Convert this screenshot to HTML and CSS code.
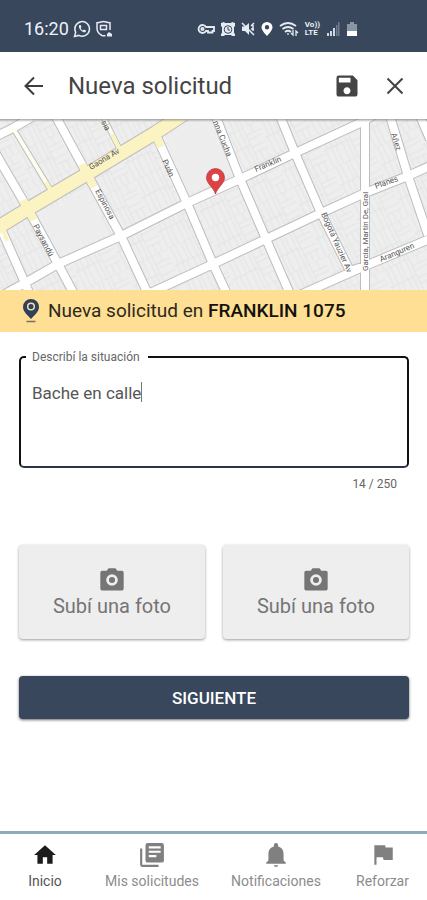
FILE: index.html
```html
<!DOCTYPE html>
<html lang="es">
<head>
<meta charset="utf-8">
<meta name="viewport" content="width=device-width, initial-scale=1">
<title>Nueva solicitud</title>
<link rel="stylesheet" href="styles.css">
</head>
<body>
<div class="status">
  <div class="status-group">
    <span class="clock">16:20</span>
    <svg width="18" height="18" viewBox="0 0 18 18" fill="none" stroke="#e6ebf2"><path d="M1.500 16.500l1.200-4.200A7.300 7.300 0 1 1 5.800 15.400z" stroke-width="1.500"/><path d="M6 5.200c-1 3 3 7.800 6.500 7l.6-1.700-2.200-1-1 .9C8.700 9.900 8 9 7.700 8l.8-.9-.9-2z" fill="#e6ebf2" stroke="none"/></svg>
    <svg width="18" height="18" viewBox="0 0 18 18" fill="none" stroke="#e6ebf2" stroke-width="1.500"><path d="M10.500 15.300c-1.500.8-2.500.7-3.500.2C3.500 13.500 2 12 2 8.500V2.800C6 2.600 6 1.500 8.500 1.500s2.500 1.100 6.500 1.300V10"/><rect x="5.500" y="5.500" width="6" height="4"/><path d="M12 16.500v-2.500l2-2 3 2v2.500z" fill="#e6ebf2" stroke="none"/></svg>
  </div>
  <div class="status-group status-right">
    <svg width="18" height="16" viewBox="0 0 18 16" fill="none" stroke="#e6ebf2" stroke-width="1.800"><path d="M9 6A4 4 0 1 0 9 10H11v1.500h4.500V10H17V6z"/><circle cx="5.500" cy="8" r="1.200"/></svg>
    <svg width="14" height="16" viewBox="0 0 14 16"><path d="M0 2l3-1 1 1h6l1-1 3 1v3l-1 1v6l1 1v2h-3l-1-1H4l-1 1H0v-2l1-1V6L0 5z" fill="#e6ebf2"/><circle cx="7" cy="8.500" r="3.800" fill="none" stroke="#38475c" stroke-width="1"/><path d="M7 6v3h2" fill="none" stroke="#38475c" stroke-width="1"/></svg>
    <svg width="14" height="16" viewBox="0 0 14 16" stroke="#e6ebf2"><path d="M1 5.500h3L8 2v12l-4-4H1z" fill="#e6ebf2" stroke="none"/><path d="M1 2l12 12M10 5l3-3M10 8h3M12 4v6" fill="none" stroke-width="1.500"/></svg>
    <svg width="12" height="16" viewBox="0 0 12 16"><path fill-rule="evenodd" d="M6 1a5.500 5.500 0 0 0-5.500 5.500C.5 9.500 6 15 6 15s5.500-5.500 5.500-8.500A5.500 5.500 0 0 0 6 1zm0 3a2.200 2.200 0 1 1 0 4.400A2.200 2.200 0 0 1 6 4z" fill="#fff"/></svg>
    <svg width="20" height="16" viewBox="0 0 20 16" fill="none" stroke="#e6ebf2" stroke-width="1.800"><path d="M1 5q8-6 16 0M3.500 8q5.500-4 11 0M6 11q3-2.500 6 0"/><path d="M9 12v2M14 9v5l-2-2M17 15v-5l2 2" stroke-width="1.300"/></svg>
    <span class="volte"><span>Vo))</span><span>LTE</span></span>
    <svg width="14" height="16" viewBox="0 0 14 16"><path d="M1 12h2v3H1zM4 10h2v5H4zM7 7h2v8H7z" fill="#d0d7e0"/><path d="M10 4h1.500v11H10zM12 1h1.500v14H12z" fill="#6f7d8f"/></svg>
    <svg width="12" height="16" viewBox="0 0 12 16"><path d="M4 1h4v2h3v7H1V3h3z" fill="#8995a5"/><path d="M1 10h10v5H1z" fill="#fff"/></svg>
  </div>
</div>

<header class="appbar">
  <button class="icon-btn" aria-label="Volver"><svg width="28" height="28" viewBox="0 0 28 28" fill="none" stroke="#3c3c3c" stroke-width="2"><path d="M23 14H6M14 5.500L5.500 14l8.500 8.500"/></svg></button>
  <h1>Nueva solicitud</h1>
  <button class="icon-btn" aria-label="Guardar"><svg width="28" height="28" viewBox="0 0 24 24"><path d="M17 3H5a2 2 0 0 0-2 2v14c0 1.100.9 2 2 2h14c1.100 0 2-.9 2-2V7l-4-4zm-5 16c-1.660 0-3-1.340-3-3s1.340-3 3-3 3 1.340 3 3-1.340 3-3 3zm3-10H5V5h10v4z" fill="#444"/></svg></button>
  <button class="icon-btn" aria-label="Cerrar"><svg width="28" height="28" viewBox="0 0 28 28" fill="none" stroke="#444" stroke-width="2"><path d="M6.500 6.500l15 15M21.500 6.500l-15 15"/></svg></button>
</header>

<main>
  <svg class="map" viewBox="0 0 427 171" preserveAspectRatio="xMidYMid slice" role="img" aria-label="Mapa">
    <defs>
      <pattern id="lots" width="46" height="38" patternUnits="userSpaceOnUse" patternTransform="rotate(-26)">
        <path d="M0 0h46M0 19h30M30 9h16M30 28h16M5 0v19M10 0v19M16 0v19M20 0v19M26 0v19M3 19v19M9 19v19M14 19v19M21 19v19M26 19v19M30 0v38M38 0v9M36 28v10M42 28v10M30 14h16M30 22h16" fill="none" stroke="#e0e1e1" stroke-width=".8"/>
      </pattern>
      <path id="r1" d="M-5 18L13 9 32-2M-5 33L0 42 28 90 58 145 74 175M2 112L25 164 30 176M55-4L87 55 121 117 148 175M155 14L187 84 213 145 227 175M216-2L240 60 266 120 290 175M280-3L295 34 321 94 350 152 365 147M365-4V175M390-3L408 57 428 116M420-3L430 20M5 175L25 164 58 145 121 117 187 84 240 60 295 34 360 4 374-4M148 175L213 145 266 120 321 94 365 74 408 57 432 46M302 175L365 147 432 119"/>
      <path id="r2" d="M13 9L50 70M103-3L119 29"/>
      <path id="r3" d="M-8 112L28 90 87 55 155 14 184-5"/>
      <linearGradient id="shade" x2="0" y2="1"><stop stop-color="#777" stop-opacity=".65"/><stop offset="1" stop-color="#777" stop-opacity="0"/></linearGradient>
    </defs>
    <rect width="427" height="171" fill="#eee"/>
    <rect width="427" height="171" fill="url(#lots)"/>
    <path d="M187 0h30l17 53-43 21-25-54zM40 94l50-27 18 48-48 23-20-36z" fill="#eee" opacity=".8"/>
    <g fill="none" stroke-linejoin="round">
      <g stroke="#bdbdbd"><use href="#r1" stroke-width="10"/><use href="#r2" stroke-width="6"/><use href="#r3" stroke-width="15"/></g>
      <use href="#r1" stroke="#fff" stroke-width="8"/>
      <use href="#r2" stroke="#fffdf0" stroke-width="4"/>
      <g stroke="#fcf3c3"><use href="#r3" stroke-width="13"/><path d="M23 81l11 20M82 45l12 23M155 14l6 14" stroke-width="8"/><path d="M112 15l7 14M46 63l6 10M3 110l4 12" stroke-width="4"/></g>
    </g>
    <g class="streets">
      <text transform="translate(91 51) rotate(-31)">Gaona Av</text>
      <text transform="translate(33 107) rotate(62)">Paysandú</text>
      <text transform="translate(95 72) rotate(62)">Espinosa</text>
      <text transform="translate(162 42) rotate(65)">Puán</text>
      <text transform="translate(101 3) rotate(62)">sia</text>
      <text transform="translate(213 3) rotate(68)">nna Cucha</text>
      <text transform="translate(256 53) rotate(-23)">Franklin</text>
      <text transform="translate(376 70) rotate(-20)">Planes</text>
      <text transform="translate(391 15) rotate(72)">Añez</text>
      <text transform="translate(321 95) rotate(66)">Bogotá Yauzier Av</text>
      <text transform="translate(368 152) rotate(-90)">García, Martín De, Gral</text>
      <text transform="translate(381 143) rotate(-23)">Aranguren</text>
    </g>
    <path d="M215.500 75c-2-7-9-10-9-16.500a9 9 0 0 1 18 0c0 6.500-7 9.500-9 16.500z" fill="#dc4345" stroke="#b83335" stroke-width=".7"/>
    <circle cx="215.500" cy="58.500" r="3.700" fill="#fff"/>
    <rect width="427" height="3" fill="url(#shade)"/>
  </svg>

  <div class="address">
    <svg width="20" height="26" viewBox="0 0 20 26"><path fill="#2f4058" d="M10 1a8 8 0 0 0-8 8c0 5 5 8.500 8 12 3-3.500 8-7 8-12a8 8 0 0 0-8-8z"/><circle cx="10" cy="8.500" r="3.300" fill="#2f4058" stroke="#f3dfab" stroke-width="1.500"/><path d="M5.500 23.500h9" stroke="#77705f" stroke-width="1.500"/></svg>
    <p>Nueva solicitud en <strong>FRANKLIN 1075</strong></p>
  </div>

  <form class="form">
    <fieldset class="field">
      <legend><label for="desc">Describí la situación</label></legend>
      <textarea id="desc" maxlength="250">Bache en calle</textarea>
      <span class="caret"></span>
    </fieldset>
    <p class="counter">14 / 250</p>
    <div class="photos">
      <button type="button" class="photo"><svg width="28" height="28" viewBox="0 0 24 24" fill="#757575"><circle cx="12" cy="12" r="2.600"/><path fill-rule="evenodd" d="M9 2L7.500 4H3.500A1.500 1.500 0 0 0 2 5.500v14A1.500 1.500 0 0 0 3.500 21h17a1.500 1.500 0 0 0 1.500-1.500v-14A1.500 1.500 0 0 0 20.500 4h-4L15 2zm3 5a5 5 0 1 1 0 10 5 5 0 0 1 0-10z"/></svg><span>Subí una foto</span></button>
      <button type="button" class="photo"><svg width="28" height="28" viewBox="0 0 24 24" fill="#757575"><circle cx="12" cy="12" r="2.600"/><path fill-rule="evenodd" d="M9 2L7.500 4H3.500A1.500 1.500 0 0 0 2 5.500v14A1.500 1.500 0 0 0 3.500 21h17a1.500 1.500 0 0 0 1.500-1.500v-14A1.500 1.500 0 0 0 20.500 4h-4L15 2zm3 5a5 5 0 1 1 0 10 5 5 0 0 1 0-10z"/></svg><span>Subí una foto</span></button>
    </div>
    <button type="button" class="next">SIGUIENTE</button>
  </form>
</main>

<nav class="tabs">
  <a href="#inicio" class="active"><svg width="26" height="26" viewBox="0 0 24 24"><path d="M10 20v-6h4v6h5v-8h3L12 3 2 12h3v8z"/></svg>Inicio</a>
  <a href="#solicitudes"><svg width="26" height="26" viewBox="0 0 24 24"><path fill-rule="evenodd" d="M1 6v15a2 2 0 0 0 2 2h15v-2H3V6zM8 1h13a2 2 0 0 1 2 2v14a2 2 0 0 1-2 2H8a2 2 0 0 1-2-2V3a2 2 0 0 1 2-2zM9 4v2h11V4zm0 4v2h11V8zm0 4v2h7v-2z"/></svg>Mis solicitudes</a>
  <a href="#notificaciones"><svg width="26" height="26" viewBox="0 0 24 24"><path d="M12 23c1.100 0 2-.7 2-1.500h-4c0 .8.900 1.500 2 1.500zM19 17v-6c0-3.500-1.900-6-5-6.800V3a2 2 0 0 0-4 0v1.200C6.900 5 5 7.500 5 11v6l-2 2v1h18v-1z"/></svg>Notificaciones</a>
  <a href="#reforzar"><svg width="26" height="26" viewBox="0 0 24 24"><path d="M14.400 5L14 3H4v18h2v-7h6l.5 2.500H21V5z"/></svg>Reforzar</a>
</nav>
</body>
</html>
```
FILE: styles.css
```css
* { box-sizing: border-box; }
body {
  margin: 0;
  min-height: 100vh;
  display: flex;
  flex-direction: column;
  background: #fff;
  font-family: Roboto, "Liberation Sans", sans-serif;
  color: #444;
}
h1, p { margin: 0; font-weight: 400; }
svg { display: block; flex: none; }
button { font: inherit; border: 0; cursor: pointer; }
main { flex: 1; }

.status {
  height: 52px;
  padding: 6px 69px 0 24px;
  display: flex;
  align-items: center;
  justify-content: space-between;
  background: #38475c;
  color: #eef2f7;
}
.status-group { display: flex; align-items: center; gap: 4px; }
.status-right { gap: 6px; }
.clock { font-size: 18px; line-height: 20px; }
.volte {
  display: flex;
  flex-direction: column;
  font-size: 8px;
  line-height: 8px;
  font-weight: 700;
}

.appbar {
  height: 67px;
  padding: 0 18px 0 20px;
  display: flex;
  align-items: center;
  gap: 20px;
}
.appbar h1 { flex: 1; font-size: 24px; line-height: 32px; }
.icon-btn { padding: 0; background: none; }

.map { width: 100%; height: 171px; }
.streets text { font-size: 8px; fill: #555; }

.address {
  height: 42px;
  padding: 0 21px;
  display: flex;
  align-items: center;
  gap: 7px;
  background: #ffdf94;
  color: #2c2920;
}
.address p { font-size: 19px; line-height: 24px; }
.address strong { font-weight: 500; color: #14120d; }

.form { padding: 18px 18px 0 19px; }
.field {
  position: relative;
  margin: 0;
  padding: 0;
  border: 2px solid #111;
  border-bottom-color: #2b3447;
  border-radius: 5px;
}
.field legend {
  margin-left: 5px;
  padding: 0 8px 0 6px;
  font-size: 12px;
  line-height: 14px;
  color: #666;
}
.field textarea {
  display: block;
  width: 100%;
  height: 102px;
  padding: 18px 11px;
  border: 0;
  outline: 0;
  resize: none;
  background: none;
  font: 17px/22px Roboto, "Liberation Sans", sans-serif;
  color: #555;
}
.caret {
  position: absolute;
  left: 120px;
  top: 18px;
  width: 1px;
  height: 20px;
  background: #777;
}
.counter {
  padding: 8px 12px 0;
  font-size: 12px;
  line-height: 16px;
  text-align: right;
  color: #666;
}
.photos {
  display: grid;
  grid-template-columns: 1fr 1fr;
  gap: 18px;
  margin-top: 53px;
}
.photo {
  height: 94px;
  padding: 0;
  display: flex;
  flex-direction: column;
  align-items: center;
  justify-content: center;
  border-radius: 4px;
  background: #eee;
  box-shadow: 0 1px 3px #0006;
  font-size: 20px;
  line-height: 24px;
  color: #757575;
}
.next {
  width: 100%;
  height: 43px;
  margin-top: 37px;
  border-radius: 4px;
  background: #38475c;
  box-shadow: 0 1px 3px #0009;
  font-size: 17px;
  font-weight: 500;
  color: #fff;
}

.tabs {
  height: 69px;
  display: grid;
  grid-template-columns: 90fr 124fr 124fr 89fr;
  border-top: 3px solid #8eabb9;
}
.tabs a {
  display: flex;
  flex-direction: column;
  align-items: center;
  padding-top: 8px;
  gap: 4px;
  font-size: 14px;
  line-height: 18px;
  color: #8c8c8c;
  text-decoration: none;
}
.tabs svg { fill: #808080; }
.tabs .active { color: #555; }
.tabs .active svg { fill: #1c1c1c; }
```
